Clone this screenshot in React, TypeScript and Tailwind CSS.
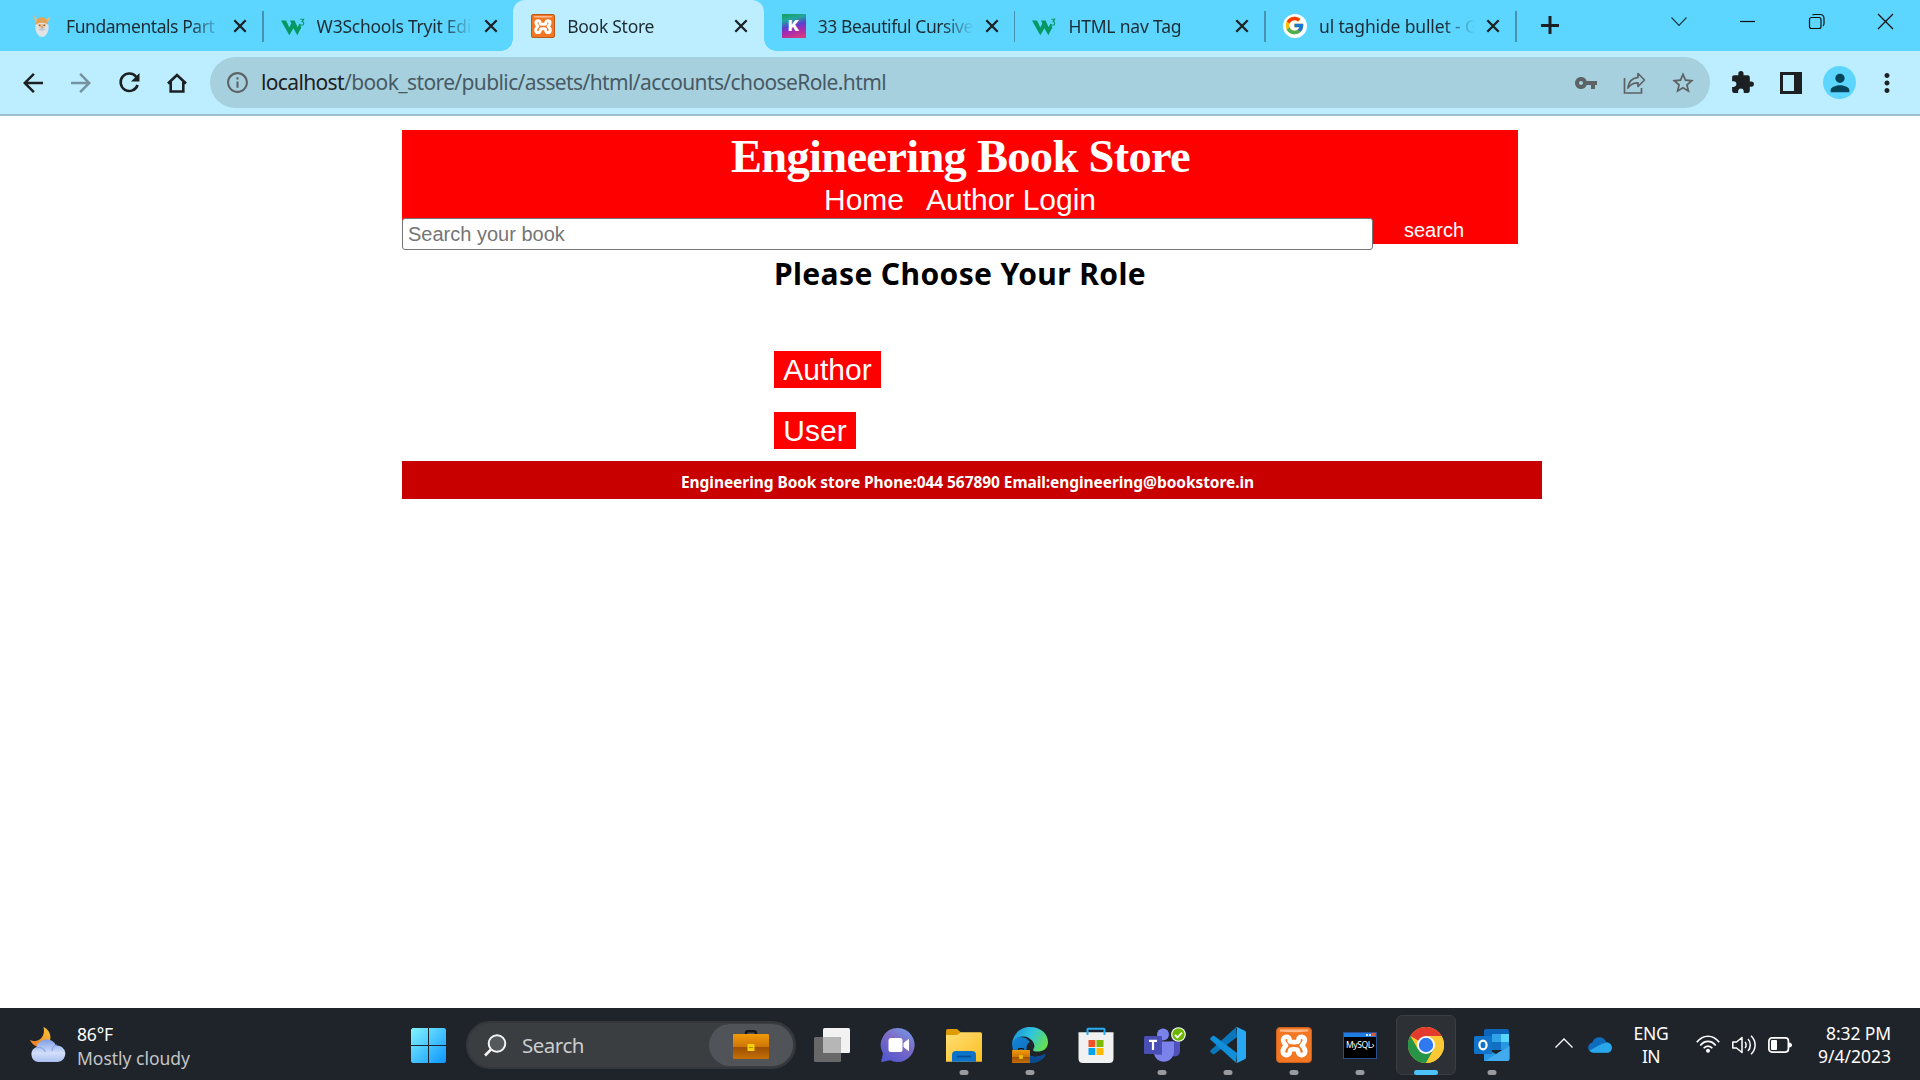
import { useLayoutEffect, useRef, type ReactNode } from "react";
import { MdArrowBack, MdArrowForward, MdVpnKey, MdStarBorder, MdExtension, MdMoreVert, MdInfoOutline, MdPerson } from "react-icons/md";
import { FcGoogle } from "react-icons/fc";

const UI = "font-['Noto_Sans','Open_Sans',sans-serif]";
const ARIAL = "font-['Liberation_Sans',Arial,sans-serif]";

/* One line of text whose tracking is adjusted so that it spans `w` pixels. */
function Fit({ w, className = "", children }: { w: number; className?: string; children: string }) {
  const ref = useRef<HTMLSpanElement>(null);
  useLayoutEffect(() => {
    const el = ref.current;
    if (!el) return;
    el.style.letterSpacing = "0px";
    const natural = el.getBoundingClientRect().width;
    el.style.letterSpacing = `${(w - natural) / children.length}px`;
  }, [w, children]);
  return (
    <span ref={ref} className={`inline-block whitespace-pre ${className}`}>
      {children}
    </span>
  );
}

/* ---------- favicons ---------- */

function Viking() {
  return (
    <svg viewBox="0 0 24 24" className="size-6">
      <path d="M4 1C4 5 5 8 8 9L10 6C7 6 5 4 4 1ZM20 1C20 5 19 8 16 9L14 6C17 6 19 4 20 1Z" fill="#efb878" />
      <path d="M6 10C6 1 18 1 18 10L17 13H7Z" fill="#e3a458" />
      <path d="M5.500 11C9 8 15 8 18.500 11C19.500 17 16 23 12 23S4.500 17 5.500 11Z" fill="#dfe3e6" />
      <path d="M7.500 10H16.500L15 13.500H9Z" fill="#edc49c" />
      <circle cx="9.800" cy="11.300" r=".8" fill="#6d4b35" />
      <circle cx="14.200" cy="11.300" r=".8" fill="#6d4b35" />
      <path d="M11 12h2l.5 2.500h-3Z" fill="#e0a273" />
      <path d="M8 15.500Q12 13 16 15.500L12 17Z" fill="#c3c9ce" />
    </svg>
  );
}

function W3() {
  return (
    <svg viewBox="0 0 24 24" className="size-6">
      <path d="M0 6.500H5L8.300 13.500L10.300 9.500L9 6.500H13.600L16.600 13.300L18.600 9.300L20.300 13.500L16.300 21.200L12.400 14.200L8.300 21.200Z" fill="#059862" />
      <path d="M19.300 5.300h3.400l-1.600 2.300c2.300.1 2.200 3.700-.4 3.600-1 0-1.500-.5-1.700-1.100" fill="none" stroke="#059862" strokeWidth="1.100" />
    </svg>
  );
}

function Xampp({ big = false }: { big?: boolean }) {
  return (
    <span className={`flex items-center justify-center bg-[#f37623] ${big ? "size-9 rounded-[4px] border border-[#c9601c]" : "size-6 rounded-[2px] border border-[#bd5b1b]"}`}>
      <svg viewBox="0 0 24 24" className={big ? "size-[34px]" : "size-[22px]"}>
        <path d="M2 1H22V2.500Q12 3.500 2 2.500Z" fill="#ffb98a" />
        <path
          d="M8.900 9.200V8.500C8.900 5.300 4.300 5.500 4.300 8.500C4.300 10.300 5.200 11 6.400 12.300C5 13.500 4.100 14.700 4.100 16.500C4.100 20 9.100 20 9.100 16.700C9.100 14.900 10 15 12 15S14.900 14.900 14.900 16.700C14.900 20 19.900 20 19.900 16.500C19.900 14.700 19 13.500 17.600 12.300C18.800 11 19.700 10.300 19.700 8.500C19.700 5.500 15.100 5.300 15.100 8.500V9.200C15.100 10.300 8.900 10.300 8.900 9.200Z"
          fill="none"
          stroke="#fff"
          strokeWidth="3.300"
          strokeLinejoin="round"
        />
      </svg>
    </span>
  );
}

function KFavicon() {
  return (
    <span className="flex size-6 items-center justify-center bg-[linear-gradient(165deg,#16a06a_5%,#22a79c_25%,#5b3fd0_48%,#a52bb0_66%,#d93b7a_95%)]">
      <span className="font-['Inter',sans-serif] text-[15px] leading-none font-black text-white">K</span>
    </span>
  );
}

function GoogleFavicon() {
  return (
    <span className="flex size-6 items-center justify-center rounded-full bg-white">
      <FcGoogle className="size-[21px]" />
    </span>
  );
}

/* ---------- browser chrome ---------- */

type TabInfo = { title: string; w: number; icon: ReactNode; active?: boolean; sep?: boolean };

const tabs: TabInfo[] = [
  { title: "Fundamentals Part 1", w: 162, icon: <Viking />, sep: true },
  { title: "W3Schools Tryit Edito", w: 171, icon: <W3 /> },
  { title: "Book Store", w: 87, icon: <Xampp />, active: true },
  { title: "33 Beautiful Cursive F", w: 168, icon: <KFavicon />, sep: true },
  { title: "HTML nav Tag", w: 113, icon: <W3 />, sep: true },
  { title: "ul taghide bullet - Go", w: 169, icon: <GoogleFavicon />, sep: true },
];

function Tab({ title, w, icon, active, sep }: TabInfo) {
  return (
    <div className={`relative flex h-[51px] w-[250.600px] shrink-0 items-center pl-[18px] ${active ? "rounded-t-[12px] bg-[#bdeeff]" : ""}`}>
      {active && (
        <>
          <span className="absolute bottom-0 -left-3 size-3 bg-[radial-gradient(circle_at_0_0,transparent_11.500px,#bdeeff_12px)]" />
          <span className="absolute -right-3 bottom-0 size-3 bg-[radial-gradient(circle_at_100%_0,transparent_11.500px,#bdeeff_12px)]" />
        </>
      )}
      {icon}
      <div className="ml-3 w-[157px] overflow-hidden [mask-image:linear-gradient(to_right,black_124px,transparent_156px)]">
        <Fit w={w} className="text-[17.500px] leading-[50px] text-[#1d2b33]">{title}</Fit>
      </div>
      <svg viewBox="0 0 14 14" className="ml-[10px] size-[14px]">
        <path d="M1.300 1.300L12.700 12.700M12.700 1.300L1.300 12.700" stroke="#1c2023" strokeWidth="2.300" />
      </svg>
      {sep && <span className="absolute top-[11px] -right-px h-[31px] w-[1.500px] bg-[#4793ae]" />}
    </div>
  );
}

function TabStrip() {
  return (
    <div className="flex h-[51px] bg-[#5cd6ff] pl-3">
      {tabs.map((t) => (
        <Tab key={t.title} {...t} />
      ))}
      <svg viewBox="0 0 18 18" className="mt-[16px] ml-[25px] size-[18px]">
        <path d="M9 0V18M0 9.500H18" stroke="#1c2023" strokeWidth="3" />
      </svg>
      <div className="ml-auto flex h-[43px] items-center">
        <svg viewBox="0 0 69 43" className="h-[43px] w-[69px]">
          <path d="M27.500 17.500L35 25.500L42.500 17.500" fill="none" stroke="#1a3541" strokeWidth="1.100" />
        </svg>
        <svg viewBox="0 0 69 43" className="h-[43px] w-[69px]">
          <path d="M27 21.500H42" stroke="#111" strokeWidth="1.200" />
        </svg>
        <svg viewBox="0 0 69 43" className="h-[43px] w-[69px]" fill="none" stroke="#111" strokeWidth="1.200">
          <rect x="27.500" y="17.500" width="11.500" height="11" rx="2" />
          <path d="M30.500 15C31 14.600 31.500 14.500 32.500 14.500H38Q42 14.500 42 18.500V23.500Q42 25 41 26" />
        </svg>
        <svg viewBox="0 0 69 43" className="h-[43px] w-[69px]">
          <path d="M27 14L42 29M42 14L27 29" stroke="#111" strokeWidth="1.300" />
        </svg>
      </div>
    </div>
  );
}

function Toolbar() {
  return (
    <div className="flex h-[65px] items-center border-b-2 border-[#9bbfce] bg-[#bdeeff] pl-[18px] text-[#1c2023]">
      <div className="flex w-[192px] items-center gap-[18px]">
        <MdArrowBack className="size-[30px] shrink-0" />
        <MdArrowForward className="size-[30px] shrink-0 text-[#76929e]" />
        <svg viewBox="0 0 30 30" className="size-[30px] shrink-0">
          <path d="M22.300 9A8.700 8.700 0 1 0 23.600 17" fill="none" stroke="currentColor" strokeWidth="2.600" />
          <path d="M25.500 5V13.500H17Z" fill="currentColor" />
        </svg>
        <svg viewBox="0 0 30 30" className="size-[30px] shrink-0">
          <path d="M6 15.500L15 7L24 15.500M8.700 14V23.500H21.300V14" fill="none" stroke="currentColor" strokeWidth="2.600" />
        </svg>
      </div>
      <div className="flex h-[51px] w-[1500px] items-center rounded-full bg-[#a6d0de] pr-[14px] pl-[15px] text-[#5d6265]">
        <MdInfoOutline className="size-[25px]" />
        <div className="ml-[11px] flex pb-[2px] text-[21px] leading-[48px]">
          <Fit w={83} className="text-[#1c2023]">localhost</Fit>
          <Fit w={542} className="text-[#485a64]">/book_store/public/assets/html/accounts/chooseRole.html</Fit>
        </div>
        <div className="ml-auto flex items-center gap-[23px]">
          <MdVpnKey className="size-6" />
          <svg viewBox="0 0 26 26" className="size-[26px]" fill="none" stroke="currentColor" strokeWidth="1.700">
            <path d="M3.500 8V23H20.500V18" />
            <path d="M17 3.500L23.500 10L17 16.500V12.800C12 12.800 9 14.500 6.800 18C7.500 12 11 8 17 7.300Z" strokeLinejoin="round" />
          </svg>
          <MdStarBorder className="size-[26px]" />
        </div>
      </div>
      <MdExtension className="ml-[20px] size-[25px]" />
      <svg viewBox="0 0 22 22" className="ml-[25px] size-[22px]">
        <path d="M0 0H22V22H0ZM3 3V19H14V3Z" fill="currentColor" fillRule="evenodd" />
      </svg>
      <span className="ml-[21px] flex size-[33px] items-center justify-center rounded-full bg-[#5cd6ff]">
        <MdPerson className="size-[28px] text-[#04455c]" />
      </span>
      <MdMoreVert className="ml-[16px] size-[30px]" />
    </div>
  );
}

/* ---------- page ---------- */

function Page() {
  return (
    <main className="flex-1 bg-white pt-[14px] pl-[402px]">
      <header className="h-[114px] w-[1116px] bg-[#ff0000] text-white">
        <h1 className="h-[50px] pl-[329px] font-['Liberation_Serif','Times_New_Roman',serif] text-[46.500px] leading-[53px] font-bold">
          <Fit w={459}>Engineering Book Store</Fit>
        </h1>
        <nav className={`flex h-[38px] gap-[22px] pl-[422px] text-[30px] leading-[40px] ${ARIAL}`}>
          <Fit w={80}>Home</Fit>
          <Fit w={170}>Author Login</Fit>
        </nav>
        <form className={`flex h-[26px] items-start text-[20px] ${ARIAL}`}>
          <input
            placeholder="Search your book"
            className="h-8 w-[971px] shrink-0 rounded-[3px] border border-[#767676] bg-white pl-[5px] leading-[30px] outline-none placeholder:text-[#757575]"
          />
          <button type="button" className="ml-[31px] h-6 leading-6">search</button>
        </form>
      </header>
      <section className="ml-[372px] pt-[6px]">
        <h2 className="h-12 text-[30px] leading-[47px] font-bold text-black">
          <Fit w={372}>Please Choose Your Role</Fit>
        </h2>
        <div className={`mt-[53px] flex flex-col items-start gap-6 text-[30px] leading-[37px] text-white ${ARIAL}`}>
          <button className="h-[37px] w-[107px] bg-[#ff0000]">Author</button>
          <button className="h-[37px] w-[82px] bg-[#ff0000]">User</button>
        </div>
      </section>
      <footer className="mt-3 h-[38px] w-[1140px] bg-[#c80000] pt-[5px] pl-[279px] text-[15.500px] leading-8 font-bold text-white">
        <Fit w={573}>Engineering Book store Phone:044 567890 Email:engineering@bookstore.in</Fit>
      </footer>
    </main>
  );
}

/* ---------- taskbar ---------- */

function Weather() {
  return (
    <svg viewBox="0 0 36 36" className="size-9">
      <defs>
        <linearGradient id="moon" x1="1" y1="0" x2="0" y2="1"><stop stopColor="#f6c83c" /><stop offset="1" stopColor="#f0731e" /></linearGradient>
        <linearGradient id="cloud" x1="0" y1="0" x2="0" y2="1"><stop stopColor="#7f9fe6" /><stop offset=".6" stopColor="#d3dffa" /><stop offset="1" stopColor="#a9c0ef" /></linearGradient>
      </defs>
      <path d="M13.500 0C20 3 23 11 18 17C12 23 3 20 0 13C8 17 16 10 13.500 0Z" fill="url(#moon)" />
      <path d="M8 35A7.800 7.800 0 0 1 6.500 20A10.500 10.500 0 0 1 26 18.500A8.300 8.300 0 0 1 28 35Z" fill="url(#cloud)" />
      <path d="M6 21C10 19.500 14 21 15.500 25M22 24C22 21 24 18.500 27 18" fill="none" stroke="#86a5e8" strokeWidth="1.200" />
    </svg>
  );
}

function StartLogo() {
  return (
    <svg viewBox="0 0 35 35" className="mt-px size-[35px]">
      <defs>
        <linearGradient id="win" gradientUnits="userSpaceOnUse" x1="0" y1="0" x2="35" y2="35"><stop stopColor="#82f4ff" /><stop offset="1" stopColor="#0c95ff" /></linearGradient>
      </defs>
      <path d="M1.500 0H17V17H0V1.500ZM18 0H33.500L35 1.500V17H18ZM0 18H17V35H1.500L0 33.500ZM18 18H35V33.500L33.500 35H18Z" fill="url(#win)" />
    </svg>
  );
}

function Briefcase({ className }: { className: string }) {
  return (
    <svg viewBox="0 0 36 29" preserveAspectRatio="none" className={className}>
      <defs>
        <linearGradient id="bag" x1="0" y1="0" x2="0" y2="1"><stop stopColor="#f29a08" /><stop offset=".5" stopColor="#cf7606" /><stop offset=".52" stopColor="#9c4f05" /><stop offset="1" stopColor="#c56f05" /></linearGradient>
      </defs>
      <path d="M13 5V3Q13 1.200 15 1.200H21Q23 1.200 23 3V5" fill="none" stroke="#161616" strokeWidth="2.500" />
      <rect y="4" width="36" height="25" rx="1" fill="url(#bag)" />
      <rect x="14.500" y="14" width="7" height="7" fill="#f4d00d" />
      <path d="M16 17.500h4" stroke="#b98a06" />
    </svg>
  );
}

function TaskView() {
  return (
    <svg viewBox="0 0 36 36" className="size-9">
      <rect x="9" y="1" width="27" height="25" rx="1.500" fill="#f2f2f2" />
      <rect y="10" width="27" height="25" rx="1.500" fill="#686868" />
      <path d="M9 10H25.500L27 11.500V26H9Z" fill="#b6b6b6" />
    </svg>
  );
}

function Chat() {
  return (
    <svg viewBox="0 0 36 36" className="size-9">
      <defs>
        <linearGradient id="chat" x1=".9" y1="0" x2=".3" y2="1"><stop stopColor="#6f9ceb" /><stop offset=".45" stopColor="#7f6cc4" /><stop offset="1" stopColor="#5558cf" /></linearGradient>
      </defs>
      <path d="M18 1A17 17 0 1 1 10 33.200L2 35Q1 35 1.300 34L3 26.500A17 17 0 0 1 18 1Z" fill="url(#chat)" />
      <rect x="8.500" y="11" width="14" height="14" rx="2.500" fill="#fff" />
      <path d="M24 16L28.500 12.500V23.500L24 20Z" fill="#fff" stroke="#fff" strokeLinejoin="round" />
    </svg>
  );
}

function Explorer() {
  return (
    <svg viewBox="0 0 36 36" className="size-9">
      <defs>
        <linearGradient id="fold" x1="0" y1="0" x2="1" y2="1"><stop stopColor="#ffdf75" /><stop offset="1" stopColor="#fcbf23" /></linearGradient>
      </defs>
      <path d="M0 4Q0 2 2 2H11L15 5.500L11 12H0Z" fill="#dd9b05" />
      <path d="M0 8H11L15 5.200H34.500Q36 5.200 36 7V34.700H0Z" fill="url(#fold)" />
      <path d="M6 34.700V28Q6 24 10 24H26Q30 24 30 28V34.700Z" fill="#0d72c9" />
      <path d="M11 29.500H25" stroke="#0a4c8c" strokeWidth="1.600" />
    </svg>
  );
}

function EdgeIcon() {
  return (
    <span className="relative flex size-9">
      <svg viewBox="0 0 36 36" className="size-9">
        <defs>
          <linearGradient id="edgeA" x1="0" y1=".2" x2="1" y2=".6"><stop stopColor="#1a94d8" /><stop offset=".5" stopColor="#30c5dd" /><stop offset="1" stopColor="#66e04e" /></linearGradient>
          <linearGradient id="edgeB" x1="0" y1="0" x2="1" y2="1"><stop stopColor="#1486d8" /><stop offset="1" stopColor="#0c5bab" /></linearGradient>
        </defs>
        <path d="M0 16C2 9 10 9 15 12L18 15C14 17 13 24 17 28C22 31 28 30 33 27C35 28 29 36 18 36C7 36 0 27 0 16Z" fill="url(#edgeB)" />
        <path d="M17 28C22 31 28 30 33 27C35 28 29 36 18 36Z" fill="#094b93" />
        <path d="M0 17C1 7 8 0 18 0C29 0 36 7 36 15C36 23 29 25 24 24.500C20 24 21 22.500 22 21C24 17 19 10 12 9.500C6 9.300 1 12 0 17Z" fill="url(#edgeA)" />
      </svg>
      <Briefcase className="absolute bottom-0 left-0 h-[15px] w-[18px]" />
    </span>
  );
}

function Store() {
  return (
    <svg viewBox="0 0 36 36" className="size-9">
      <path d="M.5 5.300H35.500V31.500Q35.500 36 31 36H5Q.5 36 .5 31.500Z" fill="#f1f1f1" />
      <path d="M9.500 8V2.200Q9.500 1.700 10 1.700H26Q26.500 1.700 26.500 2.200V8" fill="none" stroke="#27aef2" strokeWidth="2" />
      <path d="M10.500 13H17.300V20H10.500Z" fill="#f05125" />
      <path d="M18.500 13H25.500V20H18.500Z" fill="#7fba00" />
      <path d="M10.500 21H17.300V28H10.500Z" fill="#00a3ee" />
      <path d="M18.500 21H25.500V28H18.500Z" fill="#ffb900" />
    </svg>
  );
}

function Teams() {
  return (
    <svg viewBox="0 0 44 36" className="ml-2 h-9 w-11">
      <circle cx="31.500" cy="9" r="4.500" fill="#5059c9" />
      <path d="M25 14.500H36V24C36 31 26 31 25 25Z" fill="#4f52bd" />
      <circle cx="19" cy="7.500" r="6" fill="#7b83eb" />
      <path d="M10 14.500H30V24C30 38 10 38 10 25Z" fill="#7b83eb" />
      <path d="M18 9V28H12L10 20V9Z" fill="#5a60c4" />
      <rect x="0" y="9" width="18" height="18" rx="1.500" fill="#4a4fb5" />
      <path d="M5 13.800H13M9 13.800V23" stroke="#fff" strokeWidth="2.200" />
      <circle cx="34.500" cy="7.500" r="7.300" fill="#fff" />
      <circle cx="34.500" cy="7.500" r="6.200" fill="#6bb700" />
      <path d="M31 8L33.500 10.500L38 5.500" fill="none" stroke="#fff" strokeWidth="1.800" />
    </svg>
  );
}

function VSCode() {
  return (
    <svg viewBox="0 0 36 36" className="size-9">
      <path d="M26 .3L27 10L4.500 27Q3.500 27.700 2.700 27L.5 25Q-.3 24 .6 23.200Z" fill="#0a76bd" />
      <path d="M26 35.700L27 26L4.500 9Q3.500 8.300 2.700 9L.5 11Q-.3 12 .6 12.800Z" fill="#118fdb" />
      <path d="M26 .3Q26.700 0 27.500 .3L34.800 3.800Q36 4.500 36 5.800V30.200Q36 31.500 34.800 32.200L27.500 35.700Q26 36 25.300 35.300C26.500 36 27 35 27 34V2C27 1 26.500 0 25.300 .7Z" fill="#28a8f2" />
    </svg>
  );
}

function MySQL() {
  return (
    <span className="flex h-[27px] w-[34px] flex-col border border-[#2c4f91] bg-black">
      <span className="flex h-1 items-center justify-end gap-px bg-[#1e7de0] pr-px">
        <span className="size-[2px] bg-white/80" />
        <span className="size-[2px] bg-white/80" />
        <span className="size-[3px] bg-[#dd5a3c]" />
      </span>
      <span className={`pl-[2px] text-[8.500px] leading-[16px] text-white ${UI}`}>
        <Fit w={28}>MySQL›</Fit>
      </span>
    </span>
  );
}

function ChromeIcon() {
  return (
    <svg viewBox="0 0 36 36" className="size-9">
      <circle cx="18" cy="18" r="18" fill="#fcc934" />
      <path d="M18 18L2.400 9A18 18 0 0 1 33.600 9H18Z" fill="#e33b2e" />
      <path d="M2.400 9A18 18 0 0 0 18 36L25.800 22.500L18 18L10.200 22.500Z" fill="#289447" />
      <path d="M33.600 9A18 18 0 0 1 18 36L25.800 22.500L18 9Z" fill="#fcc934" />
      <circle cx="18" cy="18" r="9" fill="#fff" />
      <circle cx="18" cy="18" r="7.200" fill="#2e78f0" />
    </svg>
  );
}

function Outlook() {
  return (
    <svg viewBox="0 0 36 36" className="size-9">
      <path d="M10 4Q10 2 12 2H33Q35 2 35 4V20H10Z" fill="#0c65bb" />
      <path d="M18 7H27V15H18Z" fill="#2ea3e8" />
      <path d="M27 7H35V15H27Z" fill="#58d6fc" />
      <path d="M18 15H27V23H18Z" fill="#0f70c4" />
      <path d="M27 15H35V23H27Z" fill="#2698e2" />
      <path d="M10 34V21L22 27L35.500 18.500V32Q35.500 34 33.500 34Z" fill="#2697e6" />
      <path d="M11 34L35.500 19V32Q35.500 34 33.500 34Z" fill="#55b8f5" opacity=".6" />
      <rect x="0" y="9" width="18" height="18" rx="1.500" fill="#1273ca" />
      <ellipse cx="9" cy="18" rx="3.600" ry="4.300" fill="none" stroke="#fff" strokeWidth="2.200" />
    </svg>
  );
}

type App = { name: string; icon: ReactNode; mark?: "dot" | "bar" };

const apps: App[] = [
  { name: "task-view", icon: <TaskView /> },
  { name: "chat", icon: <Chat /> },
  { name: "explorer", icon: <Explorer />, mark: "dot" },
  { name: "edge", icon: <EdgeIcon />, mark: "dot" },
  { name: "store", icon: <Store /> },
  { name: "teams", icon: <Teams />, mark: "dot" },
  { name: "vscode", icon: <VSCode />, mark: "dot" },
  { name: "xampp", icon: <Xampp big />, mark: "dot" },
  { name: "mysql", icon: <MySQL />, mark: "dot" },
  { name: "chrome", icon: <ChromeIcon />, mark: "bar" },
  { name: "outlook", icon: <Outlook />, mark: "dot" },
];

function TaskItem({ icon, mark }: App) {
  return (
    <div className={`relative flex size-[60px] shrink-0 items-center justify-center rounded-md ${mark === "bar" ? "border border-[#3a3e43] bg-[#2d3136]" : ""}`}>
      {icon}
      {mark === "dot" && <span className="absolute bottom-0 left-1/2 h-[5px] w-[9px] -translate-x-1/2 rounded-full bg-[#9a9b9e]" />}
      {mark === "bar" && <span className="absolute -bottom-px left-1/2 h-[5px] w-6 -translate-x-1/2 rounded-full bg-[#4cc2ff]" />}
    </div>
  );
}

function Taskbar() {
  return (
    <div className="flex h-[72px] items-center bg-[#1f242b] pt-[2px] text-white">
      <div className="flex w-[411px] items-center pl-[30px]">
        <Weather />
        <div className="ml-[11px] flex flex-col pt-px text-[17.500px] leading-6">
          <Fit w={36} className="w-fit">86°F</Fit>
          <Fit w={113} className="w-fit text-[#c3c5c7]">Mostly cloudy</Fit>
        </div>
      </div>
      <StartLogo />
      <div className="ml-[20px] flex h-12 w-[330px] items-center rounded-full border-2 border-[#34383c] bg-[#3a3e41] pr-px pl-[15px]">
        <svg viewBox="0 0 24 24" className="size-6" fill="none" stroke="#f3f3f3" strokeWidth="2">
          <circle cx="14" cy="10.500" r="8.300" fill="#55595c" />
          <path d="M8 16.500L2 22.500" strokeWidth="2.600" />
        </svg>
        <Fit w={62} className="ml-[15px] text-[20.500px] leading-[42px] text-[#cbcdce]">Search</Fit>
        <span className="ml-auto flex h-[42px] w-[84px] items-center justify-center rounded-full bg-[#505357]">
          <Briefcase className="mb-[1px] h-[29px] w-9" />
        </span>
      </div>
      <div className="ml-[6px] flex gap-[6px]">
        {apps.map((a) => (
          <TaskItem key={a.name} {...a} />
        ))}
      </div>
      <div className="ml-[33px] flex items-center">
        <svg viewBox="0 0 18 10" className="mb-[4px] h-[10px] w-[18px]">
          <path d="M.5 9.500L9 1L17.500 9.500" fill="none" stroke="#fff" strokeWidth="1.300" />
        </svg>
        <svg viewBox="0 0 24 16" className="ml-[15px] h-4 w-6">
          <path d="M6 15.500C-1.500 15.500-1.500 7 4.500 5.500C6 -1 16-2 18.500 5.500C25.500 5.500 25.500 15.500 19 15.500Z" fill="#0f6cbd" />
          <path d="M1.500 13.500L13.500 7L18.500 5.500C25.500 5.500 25.500 15.800 19 15.800H6Q3 15.800 1.500 13.500Z" fill="#28a8ea" />
        </svg>
        <div className="ml-[17px] flex w-[44px] flex-col items-center text-[17.500px] leading-[23px]">
          <Fit w={35}>ENG</Fit>
          <Fit w={18}>IN</Fit>
        </div>
        <svg viewBox="0 0 24 18" className="mb-[2px] ml-[23px] h-[18px] w-6" fill="none" stroke="#fff" strokeWidth="1.700">
          <path d="M.8 7.300C7-.8 17-.8 23.200 7.300M4.300 10.500C8.500 5 15.500 5 19.700 10.500M7.700 13.300C10 10.300 14 10.300 16.300 13.300" />
          <circle cx="12" cy="15.800" r="2" fill="#fff" stroke="none" />
        </svg>
        <svg viewBox="0 0 24 20" className="mb-px ml-3 h-5 w-6" fill="none" stroke="#fff" strokeWidth="1.500">
          <path d="M.8 7V13H4.500L10 17.500V2.500L4.500 7Z" strokeLinejoin="round" />
          <path d="M13 7C14.500 8.500 14.500 11.500 13 13M16 4C19 7 19 13 16 16M19 .8C24.500 6 24.500 14 19 19.200" />
        </svg>
        <svg viewBox="0 0 24 16" className="mb-px ml-3 h-4 w-6">
          <rect x=".9" y=".9" width="19.500" height="14.200" rx="3" fill="none" stroke="#fff" strokeWidth="1.700" />
          <rect x="3" y="3" width="6" height="10" rx="1" fill="#fff" />
          <path d="M21 5.500Q24 6 24 8T21 10.500Z" fill="#fff" />
        </svg>
        <div className="mb-px ml-[24px] flex w-[75px] flex-col items-end text-[17.500px] leading-[23px]">
          <Fit w={65}>8:32 PM</Fit>
          <Fit w={73}>9/4/2023</Fit>
        </div>
      </div>
    </div>
  );
}

export default function App() {
  return (
    <div className={`flex h-[1080px] w-[1920px] flex-col overflow-hidden bg-white ${UI}`}>
      <TabStrip />
      <Toolbar />
      <Page />
      <Taskbar />
    </div>
  );
}
